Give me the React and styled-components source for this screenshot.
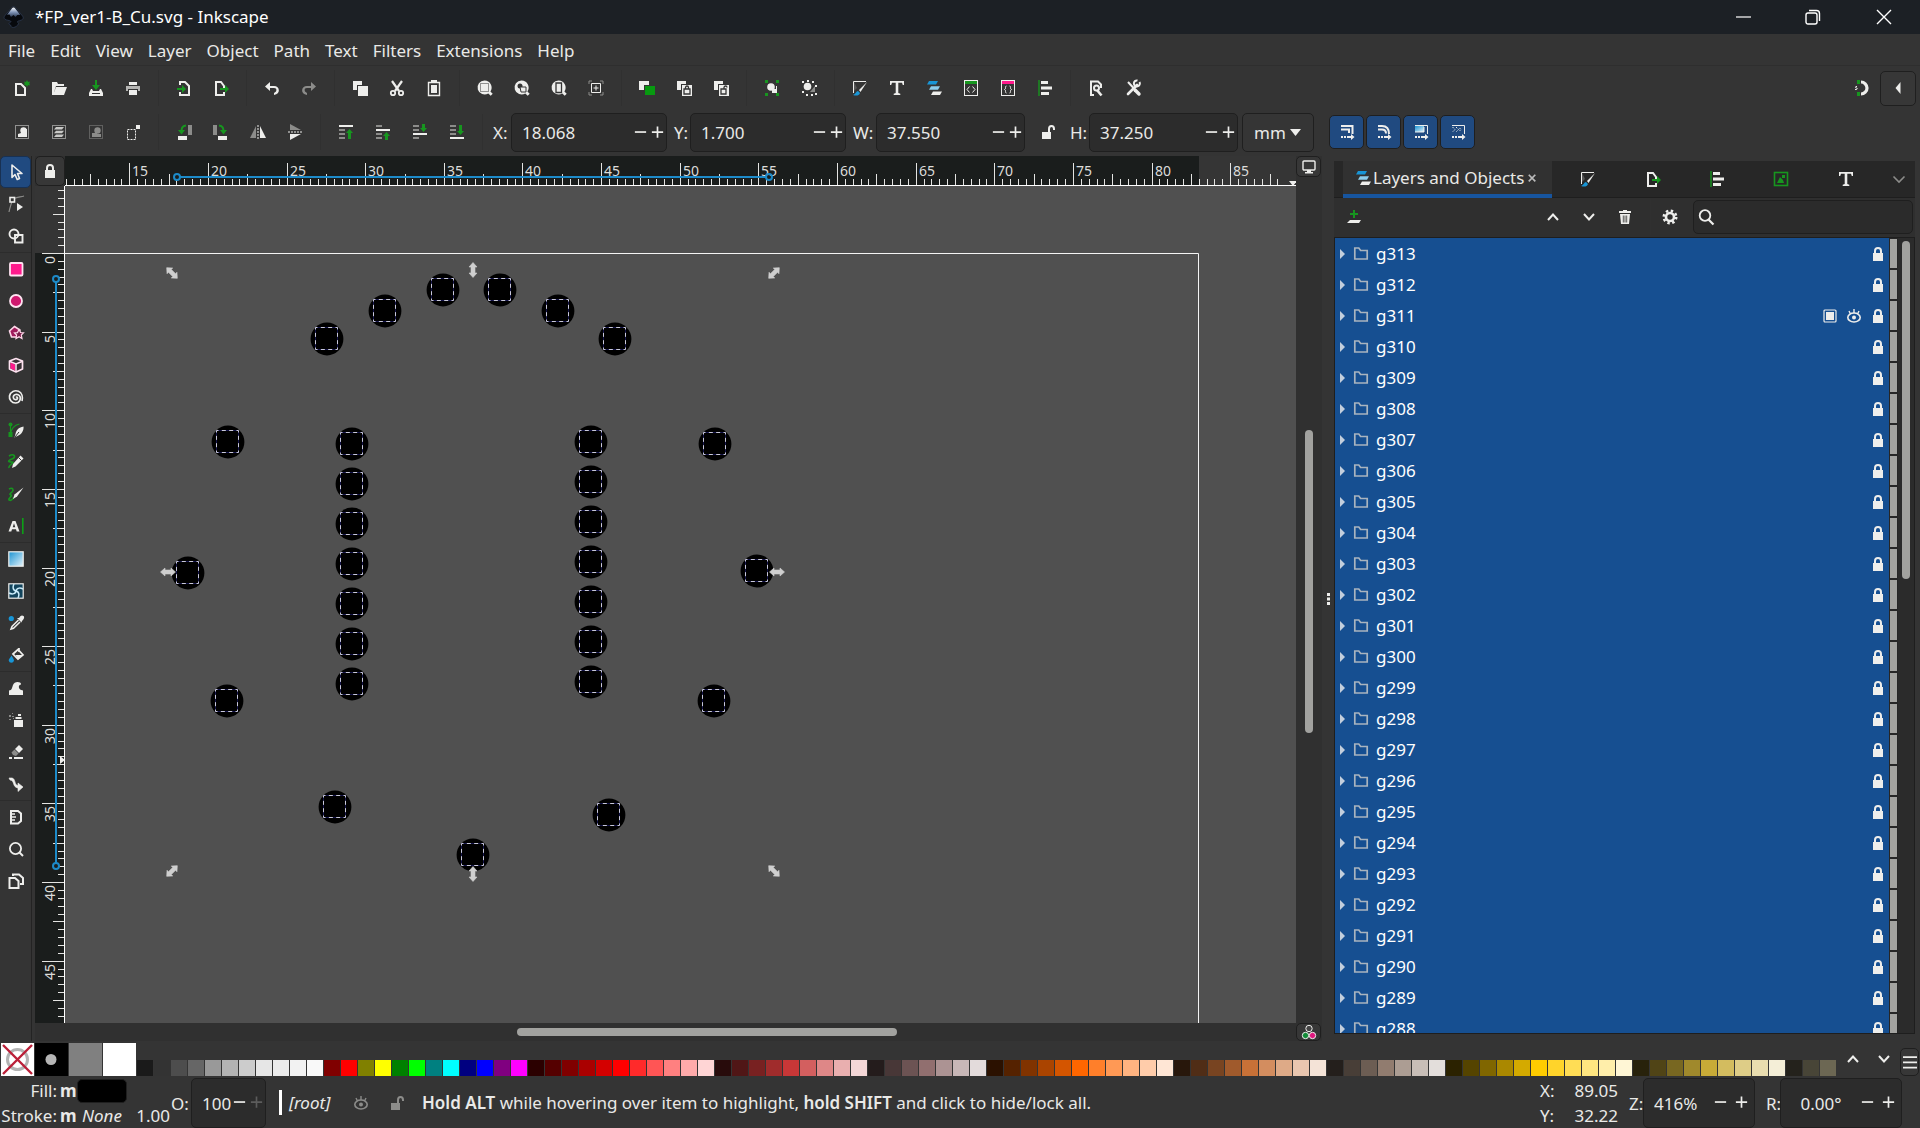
import React, { useState } from 'react'
import styled, { createGlobalStyle, css } from 'styled-components'

const fg = '#eeeeec'
const green = '#17961f'
const blue = '#1895d6'
const pink = '#ff1a8c'
const dim = '#8c8c8a'

const GlobalStyle = createGlobalStyle`
    * {
        box-sizing: border-box;
    }
    body {
        margin: 0;
        background: #343434;
        color: #e9e9e7;
        font: 17px/24px "Noto Sans", "Open Sans", sans-serif;
    }
    button, input, select {
        font: inherit;
        color: inherit;
        margin: 0;
        padding: 0;
        border: none;
        background: none;
    }
    input:focus, select:focus {
        outline: none;
    }
`

/* ---------- icons ---------- */

const handles = (color) => (
    <path d="M1 0h3v3H1zM12 0h3v3h-3zM1 13h3v3H1zM12 13h3v3h-3z" fill={color} />
)
const dotted = (color = fg) => (
    <rect x="1.5" y="1.5" width="13" height="13" fill="none" stroke={color} strokeDasharray="1 1" />
)
const stacked = (
    <>
        <path d="M1 1h9v3H5v6H1z" fill={fg} />
        <path d="M6 5h10v11H6z" fill={fg} />
    </>
)
const lens = <path d="M7.500 0.500a7 7 0 1 0 3.800 12.900l2.400 2.400 2-2-2.300-2.400A7 7 0 0 0 7.500 .5z" fill={fg} />
const tails = <path d="M2 12h2v2H2zM5 12h2v2H5zM8 12h4v-2l3.500 3-3.500 3v-2H8z" fill={fg} />

const icons = {
    new: <><path d="M2 4h5l4 4v7H2z" fill="none" stroke={fg} strokeWidth="2" /><path d="M13 0l1 2 2-.5-.7 2 .7 2-2-.6-1 2-1-2-2 .6.7-2-.7-2 2 .5z" fill={green} /></>,
    open: <path d="M1 2h5l1 2h6v2H5l-2 6V15H1zM5 7h11l-3 8H2z" fill={fg} />,
    save: <><path d="M7 0h2v5h3l-4 5-4-5h3z" fill={green} /><path d="M3 9h1l1 2h6l1-2h1l2 4v3H1v-3zM4 13v1h8v-1z" fill={fg} fillRule="evenodd" /></>,
    print: <><path d="M4 2h8v3H4z" fill={fg} /><path d="M1 6h14v5h-2V9H3v2H1z" fill="#b5b5b3" /><path d="M4 10h8v5H4z" fill={fg} /></>,
    import: <><path d="M4 5V2h5l4 4v9H4v-3" fill="none" stroke={fg} strokeWidth="2" /><path d="M1 8h5V5l4 4-4 4v-3H1z" fill={green} /></>,
    export: <><path d="M11 12v3H3V2h5l3 4v2" fill="none" stroke={fg} strokeWidth="2" /><path d="M7 8h5V5l4 4-4 4v-3H7z" fill={green} /></>,
    undo: <path d="M6 2L1 6.500l5 4.500V8h4c2 0 3 1 2 3.500L10 13v2c7-1 6-9 0-9H6z" fill={fg} />,
    redo: <path d="M10 2l5 4.500-5 4.500V8H6c-2 0-3 1-2 3.500L6 13v2C-1 14 0 6 6 6h4z" fill={dim} />,
    copy: <><path d="M1 1h9v4H5v5H1z" fill={fg} /><path d="M6 6h10v10H6z" fill={fg} /><path d="M5.500 10V5.500H10" fill="none" stroke="#343434" /></>,
    cut: <><path d="M3 1l7 10M13 1L6 11" stroke={fg} strokeWidth="2.200" fill="none" /><circle cx="4" cy="13" r="2.200" fill="none" stroke={fg} strokeWidth="1.800" /><circle cx="12" cy="13" r="2.200" fill="none" stroke={fg} strokeWidth="1.800" /></>,
    paste: <><path d="M2.500 2.500h11v13h-11z" fill="none" stroke={fg} strokeWidth="1.400" /><path d="M5 0h6v3H5z" fill={fg} /><path d="M5 5h6v8H5z" fill={fg} /></>,
    zoomSel: <>{lens}<rect x="3.500" y="3.500" width="8" height="8" fill="none" stroke="#343434" strokeDasharray="1 1" /></>,
    zoomDraw: <>{lens}<circle cx="6" cy="6" r="2.500" fill="#343434" /><path d="M6 7h6v5H7z" fill={fg} stroke="#343434" /></>,
    zoomPage: <>{lens}<path d="M5 3h5.500v9.500H5z" fill="none" stroke="#343434" strokeWidth="1.300" /></>,
    zoomCenter: <><path d="M3.500 3.500h9v9h-9z" fill="none" stroke={fg} /><path d="M1 4V1h3M12 1h3v3M15 12v3h-3M4 15H1v-3" fill="none" stroke={dim} /><path d="M8 5.500v5M5.500 8h5" stroke={fg} /></>,
    duplicate: <><path d="M0 1h10v4H5v5H0z" fill={fg} /><path d="M6 6h10v9H6z" fill="#079a10" /></>,
    clone: <>{stacked}<path d="M8 9h6v5H8zM9.500 9V7.500c0-2 3-2 3 0V9" fill="none" stroke="#343434" strokeWidth="1.300" /></>,
    unclone: <>{stacked}<path d="M8 9h5v5H8zM11 9V7.500c0-2 3-2 3 0" fill="none" stroke="#343434" strokeWidth="1.300" /></>,
    group: <>{handles('#17961f')}<path d="M8 9h4V6h1v7H8z" fill={fg} /><circle cx="7" cy="7" r="3.800" fill={fg} /></>,
    ungroup: <><path d="M1 1h2v2H1zM6 0h2v2H6zM11 1h2v2h-2zM14 5h2v2h-2zM1 11h2v2H1zM5 14h2v2H5zM10 14h2v2h-2zM14 13h2v2h-2z" fill={fg} /><path d="M9 12h5V6z" fill={dim} /><circle cx="6.500" cy="6.500" r="3.800" fill={fg} /></>,
    fill: <><path d="M14 1.500H1.500V13" fill="none" stroke={fg} /><path d="M2 2v9l3-3z" fill="#555" /><path d="M15 2L7 10l1.500 2z" fill={fg} /><path d="M6 11c-2 0-2 3-5 4 3 1 6 1 7-2z" fill={blue} /></>,
    text: <path d="M1 1h14v4h-1.200L13 2.800H9.300V13l2 .8V15H4.700v-1.200l2-.8V2.800H3L2.200 5H1z" fill={fg} />,
    layers: <><path d="M3 1h9l-2 3.500H1z" fill={blue} /><path d="M5 6.200h9l-2 3.500H3z" fill="#8ccdec" /><path d="M7 11.500h9L14 15H5z" fill={fg} /></>,
    xml: <><rect x="1.500" y=".500" width="13" height="15" fill="none" stroke={fg} /><path d="M2 1h12v3H2z" fill={green} /><path d="M6.500 6.500L4 9.500l2.500 3M9.500 6.500l2.500 3-2.500 3" fill="none" stroke={fg} /></>,
    css: <><rect x="1.500" y=".500" width="13" height="15" fill="none" stroke={fg} /><path d="M2 1h12v3H2z" fill={pink} /><path d="M6.500 6c-2 0 0 3-2 3.500 2 .5 0 3.500 2 3.500M9.500 6c2 0 0 3 2 3.500-2 .5 0 3.500-2 3.500" fill="none" stroke={fg} /></>,
    align: <><path d="M2 0v16" stroke={green} strokeWidth="1.400" /><path d="M4 1h7v3H4zM4 6.500h11v3H4zM4 12h8v3H4z" fill={fg} /></>,
    docprops: <><path d="M6 15H3V1.500h7l3 3V8" fill="none" stroke={fg} strokeWidth="2" /><circle cx="8.500" cy="8" r="2.500" fill="none" stroke={fg} strokeWidth="2" /><path d="M9 10l4.500 5.500" stroke={fg} strokeWidth="2.600" /></>,
    prefs: <><path d="M3 2l11 12" stroke={fg} strokeWidth="2" /><path d="M10 10l4 4" stroke={fg} strokeWidth="3.400" strokeLinecap="round" /><path d="M3 14L12 5" stroke={fg} strokeWidth="2.600" strokeLinecap="round" /><path d="M14.500 2a3 3 0 1 1-2-1.500" stroke={fg} strokeWidth="2" fill="none" /></>,
    snap: <><path d="M6 2a6 6 0 0 1 0 12" transform="translate(1)" fill="none" stroke={fg} strokeWidth="3.200" /><path d="M3 0h3v4H3zM3 12h3v4H3z" fill={green} /><path d="M3 6.500c-2-.5-2 1.500-.5 1.500S3.500 10 1 9.500" fill="none" stroke={fg} /></>,
    selectAll: <>{dotted()}<path d="M7 9h5V5h1v8H4v-3z" fill={fg} /><circle cx="9.500" cy="6.500" r="3.200" fill={fg} /><path d="M4 10h5v3H4z" fill={fg} /></>,
    selectLayers: <>{dotted()}<path d="M5 3h8l-2 2.500H3zM5 6.800h8L11 9.300H3zM5 10.600h8l-2 2.500H3z" fill="#c9c9c7" /></>,
    deselect: <>{dotted(dim)}<circle cx="9.500" cy="6.500" r="3.200" fill={dim} /><path d="M4 9h5v4H4zM9 10h4v3H9z" fill={dim} /></>,
    touch: <><path d="M2.500 5.500h8v10h-8z" fill="none" stroke={fg} strokeDasharray="2 1" /><path d="M11 1h4v4h-4z" fill={fg} /></>,
    rotL: <><path d="M12 1h4v10h-4z" fill={dim} /><path d="M2 12h9v4H2z" fill={fg} /><path d="M10 1.500C6 2 5.500 4 5.500 8" fill="none" stroke={green} strokeWidth="2" /><path d="M2 6h7l-3.500 4.500z" fill={green} /></>,
    rotR: <><path d="M0 1h4v10H0z" fill={dim} /><path d="M5 12h9v4H5z" fill={fg} /><path d="M6 1.500c4 .5 4.500 2.500 4.500 6.500" fill="none" stroke={green} strokeWidth="2" /><path d="M14 6H7l3.500 4.500z" fill={green} /></>,
    flipH: <><path d="M6 2v12H0z" fill={dim} /><path d="M10 2v12h6z" fill={fg} /><path d="M8 1v15" stroke={fg} strokeDasharray="2 1" /></>,
    flipV: <><path d="M3 6V0l11 6z" fill={dim} /><path d="M3 10v6l11-6z" fill={fg} /><path d="M1 8h15" stroke={fg} strokeDasharray="2 1" /></>,
    toTop: <><path d="M1 1h14v2H1z" fill={fg} /><path d="M1 5h6v2H1zM1 9h6v2H1zM1 13h6v2H1z" fill={dim} /><path d="M10 15V9H8l3.500-4L15 9h-2v6z" fill={green} /></>,
    raise: <><path d="M1 5h14v2H1z" fill={fg} /><path d="M1 1h6v2H1zM1 9h6v2H1zM1 13h6v2H1z" fill={dim} /><path d="M10 16v-4H8l3.500-4L15 12h-2v4z" fill={green} /></>,
    lower: <><path d="M1 9h14v2H1z" fill={fg} /><path d="M1 1h6v2H1zM1 5h6v2H1zM1 13h6v2H1z" fill={dim} /><path d="M10 0v4H8l3.500 4L15 4h-2V0z" fill={green} /></>,
    toBottom: <><path d="M1 13h14v2H1z" fill={fg} /><path d="M1 1h6v2H1zM1 5h6v2H1zM1 9h6v2H1z" fill={dim} /><path d="M10 1v6H8l3.500 4L15 7h-2V1z" fill={green} /></>,
    scaleStroke: <><path d="M2 2h11.500v8M2 5.500h8V9" fill="none" stroke={fg} strokeWidth="2" />{tails}</>,
    scaleCorner: <><path d="M2 2h4c5 0 7 3 7 8M2 5.500h4c3 0 4 1 4 4" fill="none" stroke={fg} strokeWidth="2" />{tails}</>,
    scaleGradient: <><path d="M2 2h9v6H2z" fill="url(#ramp)" /><path d="M2 1.500h12.500V10M2 8h9V3" fill="none" stroke={fg} />{tails}</>,
    scalePattern: <><path d="M2.500 3l2.500 2.500L2.500 8M6 3l2.500 2.500L6 8M9.500 4l1.500 1.500L9.500 7" fill="none" stroke={fg} strokeDasharray="1.500 1" /><path d="M2 1.500h12.500V10" fill="none" stroke={fg} />{tails}</>,
    lockOpen: <><path d="M2 8h9v7H2z" fill={fg} /><path d="M9 9V5c0-4 5-4 5 0v1" fill="none" stroke={fg} strokeWidth="2" /></>,
    lockOpenDim: <><path d="M2 8h9v7H2z" fill={dim} /><path d="M9 9V5c0-4 5-4 5 0v1" fill="none" stroke={dim} strokeWidth="2" /></>,
    lock: <><path d="M3 7h10v8H3z" fill={fg} /><path d="M5 8V5c0-4 6-4 6 0v3" fill="none" stroke={fg} strokeWidth="2" /></>,
    monitor: <><rect x="2" y="2" width="12" height="9" rx="1" fill="none" stroke={fg} strokeWidth="1.400" /><path d="M6 11h4v2h2v1.500H4V13h2z" fill={fg} /></>,
    cms: <><circle cx="8" cy="4.500" r="3.200" fill="#444" stroke={fg} /><circle cx="4.500" cy="11.500" r="3.200" fill="#118c37" stroke={fg} /><circle cx="11.500" cy="11.500" r="3.200" fill="#e0187f" stroke={fg} /></>,
    addLayer: <><path d="M8 1v8M4 5h8" stroke={green} strokeWidth="2" /><path d="M4 11h11l-2 3H1z" fill={fg} /></>,
    up: <path d="M3 11l5-5.500 5 5.500" fill="none" stroke={fg} strokeWidth="2" />,
    down: <path d="M3 5l5 5.500L13 5" fill="none" stroke={fg} strokeWidth="2" />,
    downDim: <path d="M2.500 5.500L8 11l5.500-5.500" fill="none" stroke={dim} strokeWidth="1.600" />,
    trash: <><path d="M2 2h4V1h4v1h4v2H2z" fill={fg} /><path d="M3 5h10l-1 10H4z" fill={fg} /><path d="M6.300 6.500v7M8 6.500v7M9.700 6.500v7" stroke="#343434" strokeWidth=".8" /></>,
    gear: <><circle cx="8" cy="8" r="4" fill="none" stroke={fg} strokeWidth="2.600" /><circle cx="8" cy="8" r="6.200" fill="none" stroke={fg} strokeWidth="2.600" strokeDasharray="2.400 2.470" /></>,
    search: <><circle cx="7" cy="6.500" r="5.300" fill="none" stroke={fg} strokeWidth="1.800" /><path d="M10.500 10.500l5 5" stroke={fg} strokeWidth="2.200" /></>,
    objects: <><rect x="1.500" y="1.500" width="13" height="13" fill="none" stroke={green} strokeWidth="1.600" /><path d="M4 12l3-6 3 3 1 3z" fill={green} /><path d="M9 4h3v3H9z" fill={green} /></>,
    folder: <path d="M1.800 2h4l1.800 2.500h6.600V13H1.800z" fill="none" stroke="#a9b4bf" strokeWidth="1.700" />,
    eye: <><ellipse cx="8" cy="9.500" rx="6.200" ry="4.500" fill="none" stroke={fg} strokeWidth="1.600" /><circle cx="8" cy="9.500" r="2" fill={fg} /><path d="M8 1v4M3 3l1.500 3M13 3l-1.500 3" stroke={fg} strokeWidth="1.400" /></>,
    eyeDim: <><ellipse cx="8" cy="9.500" rx="6.200" ry="4.500" fill="none" stroke={dim} strokeWidth="1.600" /><circle cx="8" cy="9.500" r="2" fill={dim} /><path d="M8 1v4M3 3l1.500 3M13 3l-1.500 3" stroke={dim} strokeWidth="1.400" /></>,
    blend: <><rect x="2" y="2" width="12" height="12" rx="1" fill="none" stroke={fg} strokeWidth="1.200" /><path d="M4 4h8v8H4z" fill={fg} /></>,
    close: <path d="M4 4l7 7M11 4l-7 7" stroke="#bbb" strokeWidth="1.800" />,
    minus: <path d="M2 7.500h12" stroke={fg} strokeWidth="1.800" />,
    plus: <path d="M2 7.500h12M8 1.500v12" stroke={fg} strokeWidth="1.800" />,
    plusDim: <path d="M2 7.500h12M8 1.500v12" stroke="#5c5c5c" strokeWidth="1.800" />,
    back: <path d="M10.500 2v12l-5-6z" fill={fg} />,
    menu: <path d="M0 2.500h16M0 8.500h16M0 14.500h16" stroke={fg} strokeWidth="2" />,

    // toolbox
    select: <path d="M4 1l10 8.500H9.500l2 5-2.300 1-2.200-5-3 3z" fill="none" stroke={fg} strokeWidth="1.600" strokeLinejoin="round" />,
    node: <><path d="M4 5c-1 4-2 6-3 11M6 2.500C10 1 13 1 16 0" fill="none" stroke={dim} strokeWidth="1.200" /><rect x="2" y="1.500" width="4.500" height="4.500" fill="#343434" stroke={fg} strokeWidth="1.600" /><path d="M9 7l6 4-6 4z" fill={fg} /></>,
    builder: <><circle cx="6" cy="6" r="4.500" fill="none" stroke={fg} strokeWidth="1.900" /><path d="M7 7h7.500v7.500H7z" fill="none" stroke={fg} strokeWidth="1.900" /></>,
    rect: <rect x="2" y="2" width="12.500" height="12.500" rx="1" fill={pink} stroke="#ffe3f1" strokeWidth="1.800" />,
    circle: <circle cx="8" cy="8" r="6" fill="#d0186f" stroke="#ffe3f1" strokeWidth="1.800" />,
    star: <><path d="M6.500 1.500L12 5l-2 7H3.500L1.500 6z" fill="#a01b5c" stroke="#ffd8ea" strokeWidth="1.600" /><path d="M11 4.500l1.500 3 3 .3-2.200 2.200.7 3.500-3-1.700-3 1.700.6-3.500L6.500 8l3-.4z" fill="#7a1a48" stroke="#ffd8ea" strokeWidth="1.200" /></>,
    cube: <><path d="M8 1.500L14.500 4v8L8 15 1.500 12V4z" fill="#3a3236" stroke="#ffe3f1" strokeWidth="1.700" strokeLinejoin="round" /><path d="M2.500 5.500L7 7.500v6L2.500 11.500z" fill={pink} /><path d="M2 4.500L8 7l6-2.500M8 7v8" fill="none" stroke="#ffe3f1" strokeWidth="1.500" /></>,
    spiral: <path d="M8 8.500c1-1 2 .2 1.300 1.300-1 1.600-4 .8-4-1.500 0-3 4-4 6-1.800 2.300 2.600.6 7.500-3.800 7.500C3.500 14 1 10.500 1.500 7 2.300 2.500 7 .8 10.500 2.300 14 3.800 15 8 14 12" fill="none" stroke={fg} strokeWidth="1.700" />,
    pen: <><path d="M2.500 3v10M2.500 13c0-6 4-10 9-11" fill="none" stroke={green} strokeWidth="1.200" /><circle cx="2.500" cy="2.500" r="2" fill={green} /><path d="M.5 10h4v5h-4z" fill={green} /><path d="M15.500 4.500c.5 4-2 8-6 9.500l-3 1.500L8 10c1-3 4-5 7.500-5.500z" fill={fg} /><path d="M7 15l4-5" stroke="#343434" /></>,
    pencil: <><path d="M1 2c5-3 8 1 3 3S0 8 4 8s-4 3-3 6" fill="none" stroke={green} strokeWidth="1.600" /><path d="M12.500 1.500l3 3-8 8L4 14l1-4z" fill={fg} /><path d="M10.500 3.500l3 3" stroke="#343434" /></>,
    brush: <><path d="M1 3c4-2 5 1 3 3s-3 2-1 3-3 3-2 5c2 1 4-1 5-3" fill="none" stroke={green} strokeWidth="1.600" /><path d="M15.500 1.500L9 10.500 5 13l1.500-4.500z" fill={fg} /></>,
    textTool: <><path d="M.5 13.500L4.500 3h3l4 10.500H8.700L8 11.300H4L3.300 13.500zM4.700 9.200h2.600L6 5.300z" fill={fg} fillRule="evenodd" /><path d="M14.800 0v16" stroke="#0ca016" strokeWidth="1.600" /></>,
    gradient: <rect x=".8" y=".8" width="14.400" height="14.400" fill="url(#ramp)" stroke={fg} strokeWidth="1.200" />,
    mesh: <><rect x=".8" y=".8" width="14.400" height="14.400" fill="#12445c" stroke={fg} strokeWidth="1.200" /><path d="M8 8C4 7 5 3 6 1M8 8c4 1 3 5 2 7M8 8C7 12 3 11 1 10M8 8c1-4 5-3 7-2" fill="none" stroke="#c8ebfa" strokeWidth="1.500" /></>,
    dropper: <><circle cx="3.300" cy="3.500" r="2.600" fill={blue} /><path d="M15.500 1c-2-1.500-3.500.5-4.500 2L9 3l4.500 4.500L14 6c1.500-1.500 3-3.500 1.500-5z" fill={fg} /><path d="M10.500 5L4 11.500 3 14l2.500-.7L12 7" fill="none" stroke={fg} strokeWidth="1.500" /></>,
    bucket: <><path d="M3.500 8.500C5 11 6 12 6 13.500a2.700 2.700 0 0 1-5.300 0C.7 12 2 11 3.500 8.500z" fill={blue} /><path d="M5 7l5-4.500L15 8l-5 4zM11 1v4" fill="none" stroke={fg} strokeWidth="1.700" /><path d="M7.500 8H15l-5 4z" fill={fg} /></>,
    tweak: <path d="M1 15V10.500c3 0 3-3 4-5.500s4-4 7-2.500c1.500 1 1 2 .5 2.300C10 5 10 10 15 10.500V15z" fill={fg} />,
    spray: <><path d="M6 8h9v7H6zM7.500 5h6v2h-6zM10 2h3v2h-3z" fill={fg} /><path d="M1 3h2v2H1zM4 1h1v1H4zM4 4h2v1H4zM1 7h2v1H1zM5 6h1v1H5z" fill={dim} /></>,
    eraser: <><path d="M11 1l4 4-4 4-4-4z" fill={fg} /><path d="M6.500 5.500l4 4L8 12 5 11 3.500 8.500z" fill={dim} /><path d="M1 14h3M6 14h9" stroke={fg} strokeWidth="2" /></>,
    connector: <path d="M1 2h3c4 1 2 7 6 7.500V7l5 4-5 4.500V12C4 11 7 4.500 2 4z" fill={fg} stroke={fg} strokeWidth=".6" />,
    measure: <><path d="M3 2h7l3 2.500v7.500l-3 2.500H3z" fill="none" stroke={fg} strokeWidth="2" /><path d="M3 5h4M3 8h5M3 11h4" stroke={fg} strokeWidth="1.300" /></>,
    zoom: <><circle cx="7.500" cy="7.500" r="5.600" fill="none" stroke={fg} strokeWidth="1.800" /><path d="M11.500 11.500L15 15" stroke={fg} strokeWidth="2" /></>,
    pages: <><path d="M5 3V1.500h6l4 3.500v6h-3" fill="none" stroke={fg} strokeWidth="2" /><path d="M1.500 5H7l3.500 3v7h-9z" fill="none" stroke={fg} strokeWidth="2" /></>,
}

const Svg = styled.svg`
    display: block;
    flex: none;
    overflow: visible;
`
const Icon = ({ name, size = 16 }) => (
    <Svg width={size} height={size} viewBox="0 0 16 16" aria-hidden="true">{icons[name]}</Svg>
)

/* ---------- window chrome ---------- */

const Window = styled.div`
    display: flex;
    flex-direction: column;
    height: 100vh;
    overflow: hidden;
`
const TitleBar = styled.header`
    display: flex;
    align-items: center;
    height: 34px;
    flex: none;
    background: #1c2025;
    padding: 0 1px 0 3px;
    & > h1 {
        flex: 1;
        margin: 0 0 0 11px;
        font-size: 17px;
        font-weight: 400;
        color: #fff;
    }
`
const WindowButton = styled.button`
    width: 70px;
    height: 34px;
    display: grid;
    place-items: center;
`
const MenuBar = styled.nav`
    display: flex;
    align-items: center;
    gap: 1px;
    flex: none;
    height: 32px;
    padding: 2px 1px 0;
    border-bottom: 1px solid #2e2e2e;
    & > button {
        padding: 0 7px;
    }
`
const Toolbar = styled.div`
    display: flex;
    align-items: center;
    flex: none;
    height: ${({ $h }) => $h}px;
    padding: 0 4px ${({ $h }) => ($h === 46 ? 2 : 4)}px 3px;
`
const ToolButton = styled.button`
    display: flex;
    align-items: center;
    justify-content: center;
    width: ${({ $w }) => $w || 37}px;
    height: 34px;
    flex: none;
`
const Gap = styled.div`
    width: ${({ $w }) => $w}px;
    flex: none;
`
const Separator = styled.span`
    width: 1px;
    height: 36px;
    margin: 0 6px 0 7px;
    flex: none;
    background: #303030;
`
const Spacer = styled.div`
    flex: 1;
`
const frame = css`
    border: 1px solid #1f1f1f;
    border-radius: 5px;
`
const FramedButton = styled.button`
    ${frame}
    display: grid;
    place-items: center;
    width: ${({ $w }) => $w}px;
    height: ${({ $h }) => $h}px;
    flex: none;
    background: #373737;
`
const Toggle = styled.button`
    ${frame}
    display: grid;
    place-items: center;
    width: 35px;
    height: 34px;
    margin-right: 2px;
    flex: none;
    background: #204a80;
`
const Field = styled.div`
    display: flex;
    align-items: center;
    flex: none;
    & > label {
        width: ${({ $label }) => $label}px;
        padding-top: 2px;
        flex: none;
        white-space: nowrap;
    }
`
const SpinFrame = styled.div`
    ${frame}
    display: flex;
    align-items: center;
    width: ${({ $w }) => $w}px;
    height: ${({ $h }) => $h}px;
    padding-right: ${({ $pad }) => $pad}px;
    background: #2c2c2c;
    & > input {
        flex: 1;
        min-width: 0;
        padding: 2px 0 0 ${({ $align }) => ($align ? 4 : 10)}px;
        text-align: ${({ $align }) => $align || 'left'};
    }
    & > button {
        display: grid;
        place-items: center;
        width: ${({ $step }) => $step}px;
        height: 32px;
        flex: none;
    }
`
const UnitSelect = styled.div`
    ${frame}
    position: relative;
    display: flex;
    align-items: center;
    width: 72px;
    height: 39px;
    margin: 0 15px 0 4px;
    background: #353535;
    & > select {
        appearance: none;
        width: 100%;
        height: 100%;
        padding: 2px 0 0 11px;
    }
    & > svg {
        position: absolute;
        right: 12px;
        pointer-events: none;
    }
`

function Spin({ id, label, labelWidth, value, width, height = 39, step = 17, pad = 0, align, plus = 'plus', size = 15 }) {
    const [text, setText] = useState(value)
    return (
        <Field $label={labelWidth}>
            <label htmlFor={id}>{label}</label>
            <SpinFrame $w={width} $h={height} $step={step} $pad={pad} $align={align}>
                <input id={id} value={text} onChange={(e) => setText(e.target.value)} />
                <button aria-label={`Decrease ${label}`}><Icon name="minus" size={size} /></button>
                <button aria-label={`Increase ${label}`}><Icon name={plus} size={size} /></button>
            </SpinFrame>
        </Field>
    )
}

/* ---------- workspace ---------- */

const Workspace = styled.main`
    display: flex;
    flex: 1;
    min-height: 0;
`
const Toolbox = styled.aside`
    width: 32px;
    flex: none;
    border-right: 1px solid #232323;
`
const Tool = styled.button`
    display: grid;
    place-items: center;
    width: 31px;
    height: 32px;
    border: 1px solid transparent;
    border-radius: 5px;
    ${({ $active }) => $active && css`
        background: #204a80;
        border-color: #183153;
    `}
`
const ToolRule = styled.div`
    height: 1px;
    background: #2c2c2c;
`
const Editor = styled.section`
    display: grid;
    grid-template-columns: 30px minmax(0, 1fr) 26px;
    grid-template-rows: 30px minmax(0, 1fr) 18px;
    flex: 1;
    min-width: 0;
    margin-left: 3px;
    background: #303030;
`
const Drawing = styled.svg`
    display: block;
    width: 100%;
    height: 100%;
    background: ${({ $bg }) => $bg};
    & text {
        font-size: 14px;
        fill: #dcdcda;
    }
`
const Track = styled.div`
    position: relative;
    min-width: 0;
    min-height: 0;
`
const Thumb = styled.div`
    position: absolute;
    border-radius: 4px;
    background: #a2a29f;
    ${({ $horizontal, $from, $length }) => $horizontal
        ? css`top: 5px; height: 8px; left: ${$from}%; width: ${$length}%;`
        : css`left: 50%; margin-left: -4px; width: 8px; top: ${$from}%; height: ${$length}%;`}
`
const Splitter = styled.div`
    display: grid;
    place-items: center;
    width: 12px;
    flex: none;
`

const UNIT = 15.727

// Ticks every half unit, longer at 2.5, full height with a number at 5.
function Ruler({ vertical, origin, from, to, lineFrom, lineTo, pageFrom, pageTo, marker }) {
    const ticks = []
    for (let i = from * 2; i <= to * 2; i++) {
        const at = Math.round(origin + (i / 2) * UNIT) + 0.5
        const start = i % 10 === 0 ? 7 : i % 5 === 0 ? 18 : 23
        ticks.push(vertical ? `M${start} ${at}H29` : `M${at} ${start}V29`)
    }
    const labels = []
    for (let n = Math.ceil(from / 5) * 5; n <= to; n += 5) labels.push(n)
    return (
        <Drawing $bg="#353535">
            {vertical
                ? <rect x="0" y={pageFrom} width="30" height="2000" fill="#1a1d1c" />
                : <rect x="0" y="0" width={pageTo} height="30" fill="#1a1d1c" />}
            <path d={ticks.join('')} stroke="#e4e4e2" />
            <path d={vertical ? 'M29.5 0V2000' : 'M0 29.5H3000'} stroke="#fff" />
            {labels.map((n) => {
                const at = Math.round(origin + n * UNIT)
                return vertical
                    ? <text key={n} transform={`translate(20 ${at + 3}) rotate(-90)`} textAnchor="end">{n}</text>
                    : <text key={n} x={at + 3} y="20">{n}</text>
            })}
            <g fill="none" stroke="#1d8ac8" strokeWidth="2">
                {vertical ? (
                    <>
                        <path d={`M21 ${lineFrom + 3}V${lineTo - 3}`} />
                        <circle cx="21" cy={lineFrom} r="3" />
                        <circle cx="21" cy={lineTo} r="3" />
                    </>
                ) : (
                    <>
                        <path d={`M${lineFrom + 3} 21H${lineTo - 3}`} />
                        <circle cx={lineFrom} cy="21" r="3" />
                        <circle cx={lineTo} cy="21" r="3" />
                    </>
                )}
            </g>
            <path
                d={vertical ? `M25 ${marker - 4}l5 4l-5 4z` : `M${marker - 4} 25h8l-4 5z`}
                fill={fg}
            />
        </Drawing>
    )
}

const column = (x, y) => Array.from({ length: 7 }, (_, i) => [x, y + i * 40])
const pads = [
    [262, 153], [320, 125], [378, 104], [435, 104], [493, 125], [550, 153],
    [163, 256], [650, 258], [123, 387], [692, 385], [162, 515], [649, 515],
    [270, 621], [544, 629], [408, 669],
    ...column(287, 258), ...column(526, 256),
]
const arrows = [
    [107, 87, 45], [408, 84, 90], [709, 87, -45], [103, 386, 0],
    [712, 386, 0], [107, 685, -45], [709, 685, 45], [408, 688, 90],
]

function Canvas() {
    return (
        <Drawing $bg="#505050">
            <path d="M0 67.500H1133.500V2000" fill="none" stroke="#f4f4f4" />
            {pads.map(([x, y]) => (
                <g key={`${x}-${y}`}>
                    <circle cx={x} cy={y} r="16.400" />
                    <rect x={x - 11.5} y={y - 11.5} width="22" height="22" fill="none" stroke="#14144a" />
                    <rect x={x - 11.5} y={y - 11.5} width="22" height="22" fill="none" stroke="#c9c9da" strokeDasharray="4 3.330" strokeDashoffset="2" />
                </g>
            ))}
            {arrows.map(([x, y, turn]) => (
                <path
                    key={`${x}-${y}`}
                    transform={`translate(${x} ${y}) rotate(${turn})`}
                    d="M-7.500 0L-3-4V-2H3V-4L7.500 0 3 4V2H-3V4z"
                    fill="#cfcfcf"
                    stroke="#cfcfcf"
                    strokeWidth=".6"
                />
            ))}
        </Drawing>
    )
}

/* ---------- dock ---------- */

const Dock = styled.aside`
    display: flex;
    flex-direction: column;
    width: 581px;
    flex: none;
    margin: 5px 5px 7px 0;
    background: #2f2f2f;
`
const Tabs = styled.div`
    display: flex;
    align-items: center;
    height: 37px;
    flex: none;
    padding: 0 1px 0 9px;
    background: #272727;
    border-bottom: 1px solid #1e1e1e;
`
const ActiveTab = styled.button`
    display: flex;
    align-items: center;
    height: 37px;
    width: 209px;
    flex: none;
    margin-right: 4px;
    padding: 2px 12px 0;
    background: #313131;
    border-bottom: 4px solid #17559f;
    & > span {
        flex: 1;
        margin-left: 2px;
        text-align: left;
        white-space: nowrap;
    }
`
const Tab = styled.button`
    display: grid;
    place-items: center;
    flex: 1;
    height: 36px;
`
const PanelBar = styled.div`
    display: flex;
    align-items: center;
    height: 39px;
    flex: none;
    padding: 0 2px 2px;
`
const SearchBox = styled.label`
    ${frame}
    display: flex;
    align-items: center;
    width: 220px;
    height: 34px;
    padding: 0 4px;
    background: #2b2b2b;
    & > input {
        flex: 1;
        min-width: 0;
        margin-left: 6px;
    }
`
const ListArea = styled.div`
    display: flex;
    flex: 1;
    min-height: 0;
    border: 1px solid #1e1e1e;
    overflow: hidden;
`
const List = styled.ul`
    flex: 1;
    margin: 0;
    padding: 0;
    list-style: none;
    overflow: hidden;
`
const Row = styled.li`
    display: flex;
    height: 31px;
    background: #262626;
    & > i {
        width: 7px;
        margin: 1px;
        background: #a3a3a0;
    }
`
const RowBody = styled.div`
    display: flex;
    align-items: center;
    flex: 1;
    padding: 0 3px 0 4px;
    background: #164f91;
    color: #fff;
    & > button {
        margin-left: 8px;
    }
`
const RowName = styled.span`
    flex: 1;
    margin-left: 7px;
`
const ListTrack = styled(Track)`
    width: 16px;
    background: #2b2b2b;
`

const layers = Array.from({ length: 26 }, (_, i) => `g${313 - i}`)

function LayersPanel() {
    return (
        <Dock>
            <Tabs>
                <ActiveTab>
                    <Icon name="layers" />
                    <span>Layers and Objects</span>
                    <Icon name="close" size={15} />
                </ActiveTab>
                {['fill', 'export', 'align', 'objects', 'text'].map((name) => (
                    <Tab key={name} aria-label={name}><Icon name={name} /></Tab>
                ))}
                <Gap $w={6} />
                <ToolButton $w={30} aria-label="More panels"><Icon name="downDim" /></ToolButton>
            </Tabs>
            <PanelBar>
                <ToolButton $w={36} aria-label="Add layer"><Icon name="addLayer" /></ToolButton>
                <Spacer />
                <ToolButton $w={36} aria-label="Raise"><Icon name="up" /></ToolButton>
                <ToolButton $w={36} aria-label="Lower"><Icon name="down" /></ToolButton>
                <ToolButton $w={36} aria-label="Delete"><Icon name="trash" /></ToolButton>
                <Separator />
                <ToolButton $w={26} aria-label="Settings"><Icon name="gear" /></ToolButton>
                <Gap $w={10} />
                <SearchBox>
                    <Icon name="search" />
                    <input aria-label="Search" />
                </SearchBox>
            </PanelBar>
            <ListArea>
                <List>
                    {layers.map((name) => (
                        <Row key={name}>
                            <RowBody>
                                <Svg width="6" height="10"><path d="M1 0l5 5-5 5z" fill="#c3cfdd" /></Svg>
                                <Gap $w={8} />
                                <Icon name="folder" />
                                <RowName>{name}</RowName>
                                {name === 'g311' && (
                                    <>
                                        <button aria-label="Blend mode"><Icon name="blend" /></button>
                                        <button aria-label="Hide"><Icon name="eye" /></button>
                                    </>
                                )}
                                <button aria-label={`Unlock ${name}`}><Icon name="lock" /></button>
                            </RowBody>
                            <i />
                        </Row>
                    ))}
                </List>
                <ListTrack><Thumb $from={0.4} $length={42.5} /></ListTrack>
            </ListArea>
        </Dock>
    )
}

/* ---------- palette and status bar ---------- */

const swatches = `1a1a1a 333333 4d4d4d 666666 999999 b3b3b3 cccccc e6e6e6 ececec f2f2f2 f9f9f9
800000 ff0000 808000 ffff00 008000 00ff00 008080 00ffff 000080 0000ff 800080 ff00ff
2b0000 550000 800000 aa0000 d40000 ff0000 ff2a2a ff5555 ff8080 ffaaaa ffd5d5
280b0b 501616 782121 a02c2c c83737 d35f5f de8787 e9afaf f4d7d7
241c1c 483737 6c5353 916f6f ac9393 c8b7b7 e3dbdb
2b1100 552200 803300 aa4400 d45500 ff6600 ff7f2a ff9955 ffb380 ffccaa ffe6d5
28170b 502d16 784421 a05a2c c87137 d38d5f deaa87 e9c6af f4e3d7
241f1c 483e37 6c5d53 917c6f ac9d93 c8beb7 e3dedb
2b2200 554400 806600 aa8800 d4aa00 ffcc00 ffd42a ffdd55 ffe680 ffeeaa fff6d5
28220b 504416 786721 a0892c c8ab37 d3bc5f decd87 e9ddaf f4eed7
24221c 484537 6c6753`.split(/\s+/)

const Palette = styled.div`
    display: flex;
    align-items: flex-end;
    gap: 1px;
    height: 36px;
    flex: none;
    padding: 0 1px 1px;
`
const Swatch = styled.button`
    display: block;
    width: ${({ $big }) => ($big ? 33 : 16)}px;
    height: ${({ $big }) => ($big ? 33 : 16)}px;
    flex: none;
    background: ${({ $color }) => $color};
`
const StatusBar = styled.footer`
    display: flex;
    align-items: center;
    height: 51px;
    flex: none;
    padding: 0 18px 0 1px;
`
const StyleGrid = styled.div`
    display: grid;
    grid-template-columns: 56px 14px 50px 40px;
    grid-template-rows: 25px 25px;
    column-gap: 3px;
    align-items: center;
    width: 170px;
    padding-top: 2px;
    flex: none;
    text-align: right;
    & > em {
        text-align: center;
    }
`
const FillColor = styled.button`
    ${frame}
    height: 24px;
    background: #000;
`
const Position = styled.div`
    display: grid;
    grid-template-columns: 20px 58px;
    grid-template-rows: 25px 25px;
    align-items: center;
    margin-right: 11px;
    padding-top: 2px;
    & > span:nth-child(even) {
        text-align: right;
    }
`
const LayerBar = styled.span`
    width: 3px;
    height: 25px;
    margin: 0 7px 0 13px;
    background: #fff;
`
const LayerName = styled.em`
    width: 59px;
    padding-top: 1px;
`
const Message = styled.p`
    margin: 0 0 0 2px;
    padding-top: 1px;
    white-space: nowrap;
    & > b {
        font-weight: 600;
    }
`

const commands = [
    ['new', 'open', 'save', 'print'],
    ['import', 'export'],
    ['undo', 'redo'],
    ['copy', 'cut', 'paste'],
    ['zoomSel', 'zoomDraw', 'zoomPage', 'zoomCenter'],
    ['duplicate', 'clone', 'unclone'],
    ['group', 'ungroup'],
    ['fill', 'text', 'layers', 'xml', 'css', 'align'],
    ['docprops', 'prefs'],
]
const selectActions = [
    ['selectAll', 'selectLayers', 'deselect', 'touch'],
    ['rotL', 'rotR', 'flipH', 'flipV'],
    ['toTop', 'raise', 'lower', 'toBottom'],
]
const tools = [
    ['select', 'node', 'builder'],
    ['rect', 'circle', 'star', 'cube', 'spiral'],
    ['pen', 'pencil', 'brush', 'textTool'],
    ['gradient', 'mesh', 'dropper', 'bucket'],
    ['tweak', 'spray', 'eraser', 'connector'],
    ['measure', 'zoom', 'pages'],
]
const menus = ['File', 'Edit', 'View', 'Layer', 'Object', 'Path', 'Text', 'Filters', 'Extensions', 'Help']

const ButtonGroups = ({ groups, trailing }) => groups.map((group, i) => (
    <React.Fragment key={group[0]}>
        {group.map((name) => (
            <ToolButton key={name} aria-label={name}><Icon name={name} /></ToolButton>
        ))}
        {(trailing || i < groups.length - 1) && <Separator />}
    </React.Fragment>
))

function App() {
    const [tool, setTool] = useState('select')
    const [unit, setUnit] = useState('mm')
    return (
        <Window>
            <GlobalStyle />
            <svg width="0" height="0" style={{ position: 'absolute' }}>
                <linearGradient id="ramp" x2="1" y2="1">
                    <stop offset="0" stopColor="#1b93d2" />
                    <stop offset="1" stopColor="#e3f3fb" />
                </linearGradient>
                <linearGradient id="peak" x2="0" y2="1">
                    <stop offset="0" stopColor="#f4f6fa" />
                    <stop offset=".5" stopColor="#7f93b5" />
                    <stop offset="1" stopColor="#2a3850" />
                </linearGradient>
            </svg>
            <TitleBar>
                <Svg width="21" height="22" viewBox="0 0 21 22" aria-hidden="true">
                    <path d="M10.500 .5c1 0 2 1 3 2.300l6 7.200c1.500 2 .5 3.500-1.500 4.200-2 .8-4 .8-3.500 2 .3.800 1.500.8 1 1.800s-3 3.500-5 3.500-3-1-2.500-2c-2-.8-2.500-2-1.500-2.700 1-.6 2-1 1-1.800-1.500-.8-4-.6-5.500-1.800-1.500-1-1-2.500 0-3.700l6-7C8.800 1 9.500 .5 10.500 .5z" fill="#07090d" stroke="#2d3a52" strokeWidth=".8" />
                    <path d="M10.500 1.500c1 0 1.500.7 2.300 1.700l4.500 5.500-3 .3-1.800 2-2-2-2.500 2-1.500-2.500-2.500.3 4.300-5.600c.7-1 1.300-1.700 2.200-1.700z" fill="url(#peak)" />
                </Svg>
                <h1>*FP_ver1-B_Cu.svg - Inkscape</h1>
                <WindowButton aria-label="Minimize">
                    <Svg width="16" height="16"><path d="M0 8h15" stroke="#fff" strokeWidth="1.200" /></Svg>
                </WindowButton>
                <WindowButton aria-label="Restore">
                    <Svg width="16" height="16" fill="none" stroke="#fff" strokeWidth="1.400"><rect x="0" y="4" width="11" height="11" rx="2" /><path d="M3 1.500h7.500a3 3 0 0 1 3 3V12" /></Svg>
                </WindowButton>
                <WindowButton aria-label="Close">
                    <Svg width="16" height="16"><path d="M1 1l14 14M15 1L1 15" stroke="#fff" strokeWidth="1.400" /></Svg>
                </WindowButton>
            </TitleBar>
            <MenuBar>
                {menus.map((name) => <button key={name}>{name}</button>)}
            </MenuBar>
            <Toolbar $h={46}>
                <ButtonGroups groups={commands} />
                <Spacer />
                <ToolButton aria-label="Snapping"><Icon name="snap" /></ToolButton>
                <FramedButton $w={36} $h={35} aria-label="Snap options"><Icon name="back" /></FramedButton>
            </Toolbar>
            <Toolbar $h={44}>
                <ButtonGroups groups={selectActions} trailing />
                <Gap $w={4} />
                <Spin id="x" label="X:" labelWidth={18} value="18.068" width={156} />
                <Gap $w={7} />
                <Spin id="y" label="Y:" labelWidth={16} value="1.700" width={156} />
                <Gap $w={7} />
                <Spin id="w" label="W:" labelWidth={23} value="37.550" width={149} />
                <ToolButton $w={45} aria-label="Lock ratio"><Icon name="lockOpen" /></ToolButton>
                <Spin id="h" label="H:" labelWidth={19} value="37.250" width={149} />
                <UnitSelect>
                    <select aria-label="Unit" value={unit} onChange={(e) => setUnit(e.target.value)}>
                        <option>mm</option>
                        <option>px</option>
                        <option>in</option>
                    </select>
                    <Svg width="11" height="7"><path d="M0 0h11L5.500 7z" fill={fg} /></Svg>
                </UnitSelect>
                {['scaleStroke', 'scaleCorner', 'scaleGradient', 'scalePattern'].map((name) => (
                    <Toggle key={name} aria-label={name}><Icon name={name} /></Toggle>
                ))}
            </Toolbar>
            <Workspace>
                <Toolbox>
                    {tools.map((group, i) => (
                        <React.Fragment key={group[0]}>
                            {i > 0 && <ToolRule />}
                            {group.map((name) => (
                                <Tool key={name} $active={tool === name} onClick={() => setTool(name)} aria-label={name}>
                                    <Icon name={name} />
                                </Tool>
                            ))}
                        </React.Fragment>
                    ))}
                </Toolbox>
                <Editor>
                    <FramedButton $w={30} $h={30} aria-label="Lock guides"><Icon name="lock" /></FramedButton>
                    <Ruler origin={-171.6} from={11} to={88} lineFrom={112} lineTo={704} pageTo={1134} marker={1228} />
                    <FramedButton $w={25} $h={21} aria-label="Display mode"><Icon name="monitor" /></FramedButton>
                    <Ruler vertical origin={67} from={-4} to={49} lineFrom={93} lineTo={680} pageFrom={67} marker={574} />
                    <Canvas />
                    <Track><Thumb $from={29.2} $length={36.2} /></Track>
                    <span />
                    <Track><Thumb $horizontal $from={36.7} $length={30.9} /></Track>
                    <FramedButton $w={25} $h={18} aria-label="Color management"><Icon name="cms" /></FramedButton>
                </Editor>
                <Splitter>
                    <Svg width="3" height="12"><path d="M0 0h3v3H0zM0 4.500h3v3H0zM0 9h3v3H0z" fill={fg} /></Svg>
                </Splitter>
                <LayersPanel />
            </Workspace>
            <Palette>
                <Swatch $big $color="#fff" aria-label="None">
                    <Svg width="33" height="33" fill="none">
                        <circle cx="16.500" cy="16.500" r="10" stroke="#b3b3b3" strokeWidth="3" />
                        <path d="M2 2l29 29M31 2L2 31" stroke="#bb2038" strokeWidth="2.400" />
                    </Svg>
                </Swatch>
                <Swatch $big $color="#000" aria-label="Black">
                    <Svg width="33" height="33"><circle cx="16" cy="16.500" r="5.500" fill="#b5b5b5" /></Svg>
                </Swatch>
                <Swatch $big $color="#808080" aria-label="Gray" />
                <Swatch $big $color="#fff" aria-label="White" />
                {swatches.map((hex, i) => <Swatch key={i} $color={`#${hex}`} aria-label={`#${hex}`} />)}
                <Spacer />
                <ToolButton $w={30} aria-label="Previous colors"><Icon name="up" /></ToolButton>
                <ToolButton $w={30} aria-label="Next colors"><Icon name="down" /></ToolButton>
                <FramedButton $w={19} $h={28} aria-label="Palette menu"><Icon name="menu" size={14} /></FramedButton>
            </Palette>
            <StatusBar>
                <StyleGrid>
                    <span>Fill:</span><b>m</b><FillColor aria-label="Fill color" /><span />
                    <span>Stroke:</span><b>m</b><em>None</em><span>1.00</span>
                </StyleGrid>
                <Spin id="opacity" label="O:" labelWidth={20} value="100" width={75} height={50} plus="plusDim" />
                <LayerBar />
                <LayerName>[root]</LayerName>
                <ToolButton $w={25} aria-label="Layer visibility"><Icon name="eyeDim" /></ToolButton>
                <ToolButton $w={47} aria-label="Layer lock"><Icon name="lockOpenDim" /></ToolButton>
                <Message>
                    <b>Hold ALT</b> while hovering over item to highlight, <b>hold SHIFT</b> and click to hide/lock all.
                </Message>
                <Spacer />
                <Position>
                    <span>X:</span><span>89.05</span>
                    <span>Y:</span><span>32.22</span>
                </Position>
                <Spin id="zoom" label="Z:" labelWidth={14} value="416%" width={112} height={50} step={21} pad={2} />
                <Gap $w={11} />
                <Spin id="rotation" label="R:" labelWidth={14} value="0.00°" width={122} height={50} step={21} pad={2} align="center" />
            </StatusBar>
        </Window>
    )
}

export default App
